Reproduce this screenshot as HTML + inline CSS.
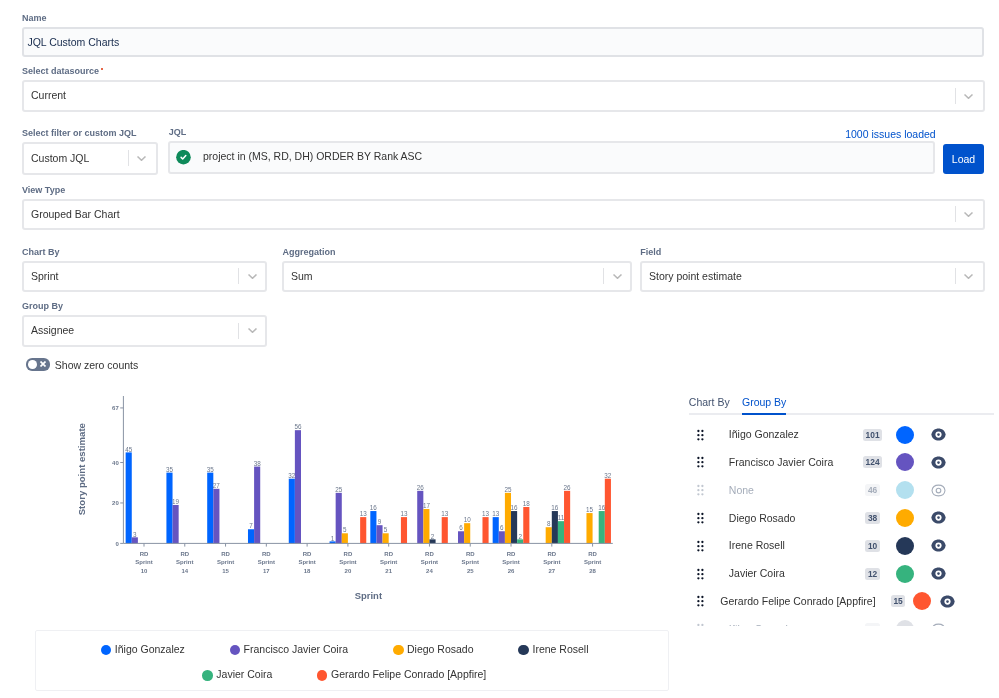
<!DOCTYPE html>
<html><head><meta charset="utf-8">
<style>
*{box-sizing:border-box;margin:0;padding:0}
html,body{width:999px;height:698px;overflow:hidden;background:#fff}
body{position:relative;font-family:"Liberation Sans",sans-serif;-webkit-font-smoothing:antialiased}
#root{position:absolute;left:0;top:0;width:999px;height:698px;will-change:transform}
.a{position:absolute;white-space:nowrap;line-height:1}
.lbl{margin-top:0.6px;font-size:9px;font-weight:bold;color:#5E6C84}
.box{position:absolute;border:2px solid #E6E7EA;border-radius:3px;background:#fff}
.txt{font-size:10.5px;color:#333}
.sep{position:absolute;width:1px;background:#E1E2E5}
.chev{position:absolute;width:9px;height:5px}
</style></head><body><div id="root">
<!-- Name -->
<div class="a lbl" style="left:22px;top:13.3px">Name</div>
<div class="box" style="left:22px;top:27px;width:962px;height:30px;background:#FAFBFC;border-color:#E0E2E6"></div>
<div class="a txt" style="left:27.4px;top:36.5px;color:#172B4D">JQL Custom Charts</div>

<!-- datasource -->
<div class="a lbl" style="left:22px;top:66.5px">Select datasource</div>
<div class="a" style="left:100.6px;top:67.5px;width:2.8px;height:2.8px;border-radius:50%;background:#DE350B"></div>
<div class="box" style="left:22px;top:80px;width:963px;height:32px"></div>
<div class="a txt" style="left:31px;top:90.3px">Current</div>
<div class="sep" style="left:955px;top:88px;height:16px"></div>
<svg class="chev" style="left:964px;top:93.5px" viewBox="0 0 9 5"><path d="M0.5 0.5 L4.5 4.3 L8.5 0.5" fill="none" stroke="#B8B8B8" stroke-width="1.5"/></svg>


<div class="a lbl" style="left:22px;top:128.58px">Select filter or custom JQL</div>
<div class="a lbl" style="left:168.7px;top:127.08px">JQL</div>
<div class="a" style="left:845.2px;top:128.91px;font-size:10.5px;color:#0052CC">1000 issues loaded</div>
<div class="box" style="left:22px;top:142px;width:136px;height:33px"></div>
<div class="sep" style="left:128px;top:150.0px;height:16px"></div>
<svg class="chev" style="left:137.3px;top:155.5px" viewBox="0 0 9 5"><path d="M0.5 0.5 L4.5 4.3 L8.5 0.5" fill="none" stroke="#B8B8B8" stroke-width="1.5"/></svg>
<div class="a txt" style="left:31px;top:152.51px;font-size:10.5px">Custom JQL</div>
<div class="box" style="left:168px;top:141px;width:767px;height:33px;background:#FAFBFC"></div>
<svg style="position:absolute;left:176px;top:150.2px" width="15" height="15" viewBox="0 0 15 15"><circle cx="7.45" cy="7.2" r="7.3" fill="#0E8A5A"/><path d="M5.1 7.4 L6.7 9.0 L9.8 5.6" fill="none" stroke="#fff" stroke-width="1.5" stroke-linecap="round" stroke-linejoin="round"/></svg>
<div class="a txt" style="left:203px;top:151.41px;font-size:10.5px">project in (MS, RD, DH) ORDER BY Rank ASC</div>
<div class="a" style="left:943px;top:144px;width:41px;height:30px;background:#0052CC;border-radius:3px"></div>
<div class="a" style="left:951.8px;top:153.91px;font-size:10.5px;color:#fff">Load</div>
<div class="a lbl" style="left:22px;top:185.28px">View Type</div>
<div class="box" style="left:22px;top:199px;width:963px;height:31px"></div>
<div class="sep" style="left:955px;top:206.0px;height:16px"></div>
<svg class="chev" style="left:964.1px;top:211.5px" viewBox="0 0 9 5"><path d="M0.5 0.5 L4.5 4.3 L8.5 0.5" fill="none" stroke="#B8B8B8" stroke-width="1.5"/></svg>
<div class="a txt" style="left:31px;top:208.71px;font-size:10.5px">Grouped Bar Chart</div>
<div class="a lbl" style="left:22px;top:247.38px">Chart By</div>
<div class="a lbl" style="left:282.6px;top:247.38px">Aggregation</div>
<div class="a lbl" style="left:640.3px;top:247.38px">Field</div>
<div class="box" style="left:22px;top:261px;width:245px;height:31px"></div>
<div class="sep" style="left:238px;top:268.0px;height:16px"></div>
<svg class="chev" style="left:247.5px;top:273.5px" viewBox="0 0 9 5"><path d="M0.5 0.5 L4.5 4.3 L8.5 0.5" fill="none" stroke="#B8B8B8" stroke-width="1.5"/></svg>
<div class="a txt" style="left:31px;top:270.81px;font-size:10.5px">Sprint</div>
<div class="box" style="left:282px;top:261px;width:350px;height:31px"></div>
<div class="sep" style="left:603.4px;top:268.0px;height:16px"></div>
<svg class="chev" style="left:612.5px;top:273.5px" viewBox="0 0 9 5"><path d="M0.5 0.5 L4.5 4.3 L8.5 0.5" fill="none" stroke="#B8B8B8" stroke-width="1.5"/></svg>
<div class="a txt" style="left:291px;top:270.81px;font-size:10.5px">Sum</div>
<div class="box" style="left:640px;top:261px;width:345px;height:31px"></div>
<div class="sep" style="left:955px;top:268.0px;height:16px"></div>
<svg class="chev" style="left:964.1px;top:273.5px" viewBox="0 0 9 5"><path d="M0.5 0.5 L4.5 4.3 L8.5 0.5" fill="none" stroke="#B8B8B8" stroke-width="1.5"/></svg>
<div class="a txt" style="left:649px;top:270.81px;font-size:10.5px">Story point estimate</div>
<div class="a lbl" style="left:22px;top:301.38px">Group By</div>
<div class="box" style="left:22px;top:315px;width:245px;height:32px"></div>
<div class="sep" style="left:238px;top:322.5px;height:16px"></div>
<svg class="chev" style="left:247.5px;top:328.0px" viewBox="0 0 9 5"><path d="M0.5 0.5 L4.5 4.3 L8.5 0.5" fill="none" stroke="#B8B8B8" stroke-width="1.5"/></svg>
<div class="a txt" style="left:31px;top:324.61px;font-size:10.5px">Assignee</div>
<div class="a" style="left:26px;top:358.4px;width:24px;height:12.2px;border-radius:6.1px;background:#67758D"></div>
<div class="a" style="left:27.8px;top:359.9px;width:8.8px;height:8.8px;border-radius:50%;background:#fff"></div>
<svg style="position:absolute;left:40.4px;top:361.4px" width="6" height="6" viewBox="0 0 6 6"><path d="M1.1 1.1L4.9 4.9M4.9 1.1L1.1 4.9" stroke="#fff" stroke-width="1.7" stroke-linecap="square"/></svg>
<div class="a txt" style="left:54.8px;top:359.71px;font-size:10.5px">Show zero counts</div>

<!--CHART-->
<svg style="position:absolute;left:0;top:0" width="999" height="698" viewBox="0 0 999 698">
<rect x="125.64" y="452.41" width="6.12" height="90.99" fill="#0065FF"/>
<text x="128.70" y="451.61" text-anchor="middle" font-size="6.3" fill="#6B778C">45</text>
<rect x="131.76" y="537.33" width="6.12" height="6.07" fill="#6554C0"/>
<text x="134.82" y="536.53" text-anchor="middle" font-size="6.3" fill="#6B778C">3</text>
<rect x="166.42" y="472.63" width="6.12" height="70.77" fill="#0065FF"/>
<text x="169.48" y="471.83" text-anchor="middle" font-size="6.3" fill="#6B778C">35</text>
<rect x="172.54" y="504.98" width="6.12" height="38.42" fill="#6554C0"/>
<text x="175.60" y="504.18" text-anchor="middle" font-size="6.3" fill="#6B778C">19</text>
<rect x="207.20" y="472.63" width="6.12" height="70.77" fill="#0065FF"/>
<text x="210.26" y="471.83" text-anchor="middle" font-size="6.3" fill="#6B778C">35</text>
<rect x="213.32" y="488.81" width="6.12" height="54.59" fill="#6554C0"/>
<text x="216.38" y="488.01" text-anchor="middle" font-size="6.3" fill="#6B778C">27</text>
<rect x="247.98" y="529.25" width="6.12" height="14.15" fill="#0065FF"/>
<text x="251.04" y="528.45" text-anchor="middle" font-size="6.3" fill="#6B778C">7</text>
<rect x="254.10" y="466.56" width="6.12" height="76.84" fill="#6554C0"/>
<text x="257.16" y="465.76" text-anchor="middle" font-size="6.3" fill="#6B778C">38</text>
<rect x="288.76" y="478.70" width="6.12" height="64.70" fill="#0065FF"/>
<text x="291.82" y="477.90" text-anchor="middle" font-size="6.3" fill="#6B778C">32</text>
<rect x="294.88" y="430.17" width="6.12" height="113.23" fill="#6554C0"/>
<text x="297.94" y="429.37" text-anchor="middle" font-size="6.3" fill="#6B778C">56</text>
<rect x="329.54" y="541.38" width="6.12" height="2.02" fill="#0065FF"/>
<text x="332.60" y="540.58" text-anchor="middle" font-size="6.3" fill="#6B778C">1</text>
<rect x="335.66" y="492.85" width="6.12" height="50.55" fill="#6554C0"/>
<text x="338.72" y="492.05" text-anchor="middle" font-size="6.3" fill="#6B778C">25</text>
<rect x="341.78" y="533.29" width="6.12" height="10.11" fill="#FFAB00"/>
<text x="344.84" y="532.49" text-anchor="middle" font-size="6.3" fill="#6B778C">5</text>
<rect x="360.14" y="517.11" width="6.12" height="26.29" fill="#FF5630"/>
<text x="363.20" y="516.31" text-anchor="middle" font-size="6.3" fill="#6B778C">13</text>
<rect x="370.32" y="511.05" width="6.12" height="32.35" fill="#0065FF"/>
<text x="373.38" y="510.25" text-anchor="middle" font-size="6.3" fill="#6B778C">16</text>
<rect x="376.44" y="525.20" width="6.12" height="18.20" fill="#6554C0"/>
<text x="379.50" y="524.40" text-anchor="middle" font-size="6.3" fill="#6B778C">9</text>
<rect x="382.56" y="533.29" width="6.12" height="10.11" fill="#FFAB00"/>
<text x="385.62" y="532.49" text-anchor="middle" font-size="6.3" fill="#6B778C">5</text>
<rect x="400.92" y="517.11" width="6.12" height="26.29" fill="#FF5630"/>
<text x="403.98" y="516.31" text-anchor="middle" font-size="6.3" fill="#6B778C">13</text>
<rect x="417.22" y="490.83" width="6.12" height="52.57" fill="#6554C0"/>
<text x="420.28" y="490.03" text-anchor="middle" font-size="6.3" fill="#6B778C">26</text>
<rect x="423.34" y="509.03" width="6.12" height="34.37" fill="#FFAB00"/>
<text x="426.40" y="508.23" text-anchor="middle" font-size="6.3" fill="#6B778C">17</text>
<rect x="429.46" y="539.36" width="6.12" height="4.04" fill="#253858"/>
<text x="432.52" y="538.56" text-anchor="middle" font-size="6.3" fill="#6B778C">2</text>
<rect x="441.70" y="517.11" width="6.12" height="26.29" fill="#FF5630"/>
<text x="444.76" y="516.31" text-anchor="middle" font-size="6.3" fill="#6B778C">13</text>
<rect x="458.00" y="531.27" width="6.12" height="12.13" fill="#6554C0"/>
<text x="461.06" y="530.47" text-anchor="middle" font-size="6.3" fill="#6B778C">6</text>
<rect x="464.12" y="523.18" width="6.12" height="20.22" fill="#FFAB00"/>
<text x="467.18" y="522.38" text-anchor="middle" font-size="6.3" fill="#6B778C">10</text>
<rect x="482.48" y="517.11" width="6.12" height="26.29" fill="#FF5630"/>
<text x="485.54" y="516.31" text-anchor="middle" font-size="6.3" fill="#6B778C">13</text>
<rect x="492.66" y="517.11" width="6.12" height="26.29" fill="#0065FF"/>
<text x="495.72" y="516.31" text-anchor="middle" font-size="6.3" fill="#6B778C">13</text>
<rect x="498.78" y="531.27" width="6.12" height="12.13" fill="#6554C0"/>
<text x="501.84" y="530.47" text-anchor="middle" font-size="6.3" fill="#6B778C">6</text>
<rect x="504.90" y="492.85" width="6.12" height="50.55" fill="#FFAB00"/>
<text x="507.96" y="492.05" text-anchor="middle" font-size="6.3" fill="#6B778C">25</text>
<rect x="511.02" y="511.05" width="6.12" height="32.35" fill="#253858"/>
<text x="514.08" y="510.25" text-anchor="middle" font-size="6.3" fill="#6B778C">16</text>
<rect x="517.14" y="539.36" width="6.12" height="4.04" fill="#36B37E"/>
<text x="520.20" y="538.56" text-anchor="middle" font-size="6.3" fill="#6B778C">2</text>
<rect x="523.26" y="507.00" width="6.12" height="36.40" fill="#FF5630"/>
<text x="526.32" y="506.20" text-anchor="middle" font-size="6.3" fill="#6B778C">18</text>
<rect x="545.68" y="527.22" width="6.12" height="16.18" fill="#FFAB00"/>
<text x="548.74" y="526.42" text-anchor="middle" font-size="6.3" fill="#6B778C">8</text>
<rect x="551.80" y="511.05" width="6.12" height="32.35" fill="#253858"/>
<text x="554.86" y="510.25" text-anchor="middle" font-size="6.3" fill="#6B778C">16</text>
<rect x="557.92" y="521.16" width="6.12" height="22.24" fill="#36B37E"/>
<text x="560.98" y="520.36" text-anchor="middle" font-size="6.3" fill="#6B778C">11</text>
<rect x="564.04" y="490.83" width="6.12" height="52.57" fill="#FF5630"/>
<text x="567.10" y="490.03" text-anchor="middle" font-size="6.3" fill="#6B778C">26</text>
<rect x="586.46" y="513.07" width="6.12" height="30.33" fill="#FFAB00"/>
<text x="589.52" y="512.27" text-anchor="middle" font-size="6.3" fill="#6B778C">15</text>
<rect x="598.70" y="511.05" width="6.12" height="32.35" fill="#36B37E"/>
<text x="601.76" y="510.25" text-anchor="middle" font-size="6.3" fill="#6B778C">16</text>
<rect x="604.82" y="478.70" width="6.12" height="64.70" fill="#FF5630"/>
<text x="607.88" y="477.90" text-anchor="middle" font-size="6.3" fill="#6B778C">32</text>
<line x1="123.4" y1="396" x2="123.4" y2="543.4" stroke="#8993A4" stroke-width="1"/>
<line x1="123.4" y1="543.4" x2="612.8" y2="543.4" stroke="#8993A4" stroke-width="1"/>
<line x1="120.2" y1="543.40" x2="123.4" y2="543.40" stroke="#8993A4" stroke-width="1"/>
<text x="118.8" y="545.50" text-anchor="end" font-size="6" font-weight="bold" fill="#6B778C">0</text>
<line x1="120.2" y1="502.96" x2="123.4" y2="502.96" stroke="#8993A4" stroke-width="1"/>
<text x="118.8" y="505.06" text-anchor="end" font-size="6" font-weight="bold" fill="#6B778C">20</text>
<line x1="120.2" y1="462.52" x2="123.4" y2="462.52" stroke="#8993A4" stroke-width="1"/>
<text x="118.8" y="464.62" text-anchor="end" font-size="6" font-weight="bold" fill="#6B778C">40</text>
<line x1="120.2" y1="407.93" x2="123.4" y2="407.93" stroke="#8993A4" stroke-width="1"/>
<text x="118.8" y="410.03" text-anchor="end" font-size="6" font-weight="bold" fill="#6B778C">67</text>
<line x1="144.00" y1="543.4" x2="144.00" y2="546.6" stroke="#8993A4" stroke-width="1"/>
<text x="144.00" y="556.3" text-anchor="middle" font-size="6" font-weight="bold" fill="#6B778C">RD</text>
<text x="144.00" y="564.2" text-anchor="middle" font-size="6" font-weight="bold" fill="#6B778C">Sprint</text>
<text x="144.00" y="572.8" text-anchor="middle" font-size="6" font-weight="bold" fill="#6B778C">10</text>
<line x1="184.78" y1="543.4" x2="184.78" y2="546.6" stroke="#8993A4" stroke-width="1"/>
<text x="184.78" y="556.3" text-anchor="middle" font-size="6" font-weight="bold" fill="#6B778C">RD</text>
<text x="184.78" y="564.2" text-anchor="middle" font-size="6" font-weight="bold" fill="#6B778C">Sprint</text>
<text x="184.78" y="572.8" text-anchor="middle" font-size="6" font-weight="bold" fill="#6B778C">14</text>
<line x1="225.56" y1="543.4" x2="225.56" y2="546.6" stroke="#8993A4" stroke-width="1"/>
<text x="225.56" y="556.3" text-anchor="middle" font-size="6" font-weight="bold" fill="#6B778C">RD</text>
<text x="225.56" y="564.2" text-anchor="middle" font-size="6" font-weight="bold" fill="#6B778C">Sprint</text>
<text x="225.56" y="572.8" text-anchor="middle" font-size="6" font-weight="bold" fill="#6B778C">15</text>
<line x1="266.34" y1="543.4" x2="266.34" y2="546.6" stroke="#8993A4" stroke-width="1"/>
<text x="266.34" y="556.3" text-anchor="middle" font-size="6" font-weight="bold" fill="#6B778C">RD</text>
<text x="266.34" y="564.2" text-anchor="middle" font-size="6" font-weight="bold" fill="#6B778C">Sprint</text>
<text x="266.34" y="572.8" text-anchor="middle" font-size="6" font-weight="bold" fill="#6B778C">17</text>
<line x1="307.12" y1="543.4" x2="307.12" y2="546.6" stroke="#8993A4" stroke-width="1"/>
<text x="307.12" y="556.3" text-anchor="middle" font-size="6" font-weight="bold" fill="#6B778C">RD</text>
<text x="307.12" y="564.2" text-anchor="middle" font-size="6" font-weight="bold" fill="#6B778C">Sprint</text>
<text x="307.12" y="572.8" text-anchor="middle" font-size="6" font-weight="bold" fill="#6B778C">18</text>
<line x1="347.90" y1="543.4" x2="347.90" y2="546.6" stroke="#8993A4" stroke-width="1"/>
<text x="347.90" y="556.3" text-anchor="middle" font-size="6" font-weight="bold" fill="#6B778C">RD</text>
<text x="347.90" y="564.2" text-anchor="middle" font-size="6" font-weight="bold" fill="#6B778C">Sprint</text>
<text x="347.90" y="572.8" text-anchor="middle" font-size="6" font-weight="bold" fill="#6B778C">20</text>
<line x1="388.68" y1="543.4" x2="388.68" y2="546.6" stroke="#8993A4" stroke-width="1"/>
<text x="388.68" y="556.3" text-anchor="middle" font-size="6" font-weight="bold" fill="#6B778C">RD</text>
<text x="388.68" y="564.2" text-anchor="middle" font-size="6" font-weight="bold" fill="#6B778C">Sprint</text>
<text x="388.68" y="572.8" text-anchor="middle" font-size="6" font-weight="bold" fill="#6B778C">21</text>
<line x1="429.46" y1="543.4" x2="429.46" y2="546.6" stroke="#8993A4" stroke-width="1"/>
<text x="429.46" y="556.3" text-anchor="middle" font-size="6" font-weight="bold" fill="#6B778C">RD</text>
<text x="429.46" y="564.2" text-anchor="middle" font-size="6" font-weight="bold" fill="#6B778C">Sprint</text>
<text x="429.46" y="572.8" text-anchor="middle" font-size="6" font-weight="bold" fill="#6B778C">24</text>
<line x1="470.24" y1="543.4" x2="470.24" y2="546.6" stroke="#8993A4" stroke-width="1"/>
<text x="470.24" y="556.3" text-anchor="middle" font-size="6" font-weight="bold" fill="#6B778C">RD</text>
<text x="470.24" y="564.2" text-anchor="middle" font-size="6" font-weight="bold" fill="#6B778C">Sprint</text>
<text x="470.24" y="572.8" text-anchor="middle" font-size="6" font-weight="bold" fill="#6B778C">25</text>
<line x1="511.02" y1="543.4" x2="511.02" y2="546.6" stroke="#8993A4" stroke-width="1"/>
<text x="511.02" y="556.3" text-anchor="middle" font-size="6" font-weight="bold" fill="#6B778C">RD</text>
<text x="511.02" y="564.2" text-anchor="middle" font-size="6" font-weight="bold" fill="#6B778C">Sprint</text>
<text x="511.02" y="572.8" text-anchor="middle" font-size="6" font-weight="bold" fill="#6B778C">26</text>
<line x1="551.80" y1="543.4" x2="551.80" y2="546.6" stroke="#8993A4" stroke-width="1"/>
<text x="551.80" y="556.3" text-anchor="middle" font-size="6" font-weight="bold" fill="#6B778C">RD</text>
<text x="551.80" y="564.2" text-anchor="middle" font-size="6" font-weight="bold" fill="#6B778C">Sprint</text>
<text x="551.80" y="572.8" text-anchor="middle" font-size="6" font-weight="bold" fill="#6B778C">27</text>
<line x1="592.58" y1="543.4" x2="592.58" y2="546.6" stroke="#8993A4" stroke-width="1"/>
<text x="592.58" y="556.3" text-anchor="middle" font-size="6" font-weight="bold" fill="#6B778C">RD</text>
<text x="592.58" y="564.2" text-anchor="middle" font-size="6" font-weight="bold" fill="#6B778C">Sprint</text>
<text x="592.58" y="572.8" text-anchor="middle" font-size="6" font-weight="bold" fill="#6B778C">28</text>
<text transform="translate(85.2,469.2) rotate(-90)" text-anchor="middle" font-size="9.6" font-weight="bold" fill="#5E6C84">Story point estimate</text>
<text x="368.4" y="598.6" text-anchor="middle" font-size="9.45" font-weight="bold" fill="#5E6C84">Sprint</text>
</svg>
<!--/CHART-->
<!--PANEL-->
<div class="a" style="left:688.8px;top:396.91px;font-size:10.5px;color:#42526E;font-weight:normal">Chart By</div>
<div class="a" style="left:742px;top:396.91px;font-size:10.5px;color:#0052CC;font-weight:normal">Group By</div>
<div class="a" style="left:689px;top:413px;width:305px;height:2px;background:#EBECF0"></div>
<div class="a" style="left:742px;top:413px;width:44px;height:2px;background:#0052CC"></div>
<div class="a" style="left:680px;top:420px;width:319px;height:206px;overflow:hidden">
<svg class="a" style="left:14px;top:8.50px" width="12" height="12" viewBox="0 0 12 12" fill="#0B1426"><circle cx="4.40" cy="2.00" r="1.15"/><circle cx="4.40" cy="6.20" r="1.15"/><circle cx="4.40" cy="10.30" r="1.15"/><circle cx="8.40" cy="2.00" r="1.15"/><circle cx="8.40" cy="6.20" r="1.15"/><circle cx="8.40" cy="10.30" r="1.15"/></svg>
<div class="a" style="left:48.799999999999955px;top:9.01px;font-size:10.5px;color:#333;font-weight:normal">Iñigo Gonzalez</div>
<div class="a" style="left:182.95px;top:8.50px;width:19.3px;height:12px;border-radius:2.5px;background:#DFE1E6;font-size:8.4px;font-weight:bold;color:#42526E;text-align:center;line-height:12.4px">101</div>
<div class="a" style="left:216.10px;top:5.50px;width:18px;height:18px;border-radius:50%;background:#0065FF"></div>
<svg class="a" style="left:250.80px;top:8.00px" width="15" height="13" viewBox="0 0 15 13"><path d="M0.4 6.5 C1.4 -1.6 13.6 -1.6 14.6 6.5 C13.6 14.6 1.4 14.6 0.4 6.5Z" fill="#3B4A69"/><circle cx="7.5" cy="6.6" r="3.1" fill="#fff"/><circle cx="7.5" cy="6.6" r="1.3" fill="#3B4A69"/></svg>
<svg class="a" style="left:14px;top:36.33px" width="12" height="12" viewBox="0 0 12 12" fill="#0B1426"><circle cx="4.40" cy="2.00" r="1.15"/><circle cx="4.40" cy="6.20" r="1.15"/><circle cx="4.40" cy="10.30" r="1.15"/><circle cx="8.40" cy="2.00" r="1.15"/><circle cx="8.40" cy="6.20" r="1.15"/><circle cx="8.40" cy="10.30" r="1.15"/></svg>
<div class="a" style="left:48.799999999999955px;top:36.84px;font-size:10.5px;color:#333;font-weight:normal">Francisco Javier Coira</div>
<div class="a" style="left:182.95px;top:36.33px;width:19.3px;height:12px;border-radius:2.5px;background:#DFE1E6;font-size:8.4px;font-weight:bold;color:#42526E;text-align:center;line-height:12.4px">124</div>
<div class="a" style="left:216.10px;top:33.33px;width:18px;height:18px;border-radius:50%;background:#6554C0"></div>
<svg class="a" style="left:250.80px;top:35.83px" width="15" height="13" viewBox="0 0 15 13"><path d="M0.4 6.5 C1.4 -1.6 13.6 -1.6 14.6 6.5 C13.6 14.6 1.4 14.6 0.4 6.5Z" fill="#3B4A69"/><circle cx="7.5" cy="6.6" r="3.1" fill="#fff"/><circle cx="7.5" cy="6.6" r="1.3" fill="#3B4A69"/></svg>
<svg class="a" style="left:14px;top:64.16px" width="12" height="12" viewBox="0 0 12 12" fill="#C1C7D0"><circle cx="4.40" cy="2.00" r="1.15"/><circle cx="4.40" cy="6.20" r="1.15"/><circle cx="4.40" cy="10.30" r="1.15"/><circle cx="8.40" cy="2.00" r="1.15"/><circle cx="8.40" cy="6.20" r="1.15"/><circle cx="8.40" cy="10.30" r="1.15"/></svg>
<div class="a" style="left:48.799999999999955px;top:64.67px;font-size:10.5px;color:#A5ADBA;font-weight:normal">None</div>
<div class="a" style="left:185.45px;top:64.16px;width:14.3px;height:12px;border-radius:2.5px;background:#F4F5F7;font-size:8.4px;font-weight:bold;color:#A5ADBA;text-align:center;line-height:12.4px">46</div>
<div class="a" style="left:216.10px;top:61.16px;width:18px;height:18px;border-radius:50%;background:#B3E0EF"></div>
<svg class="a" style="left:250.80px;top:63.66px" width="15" height="13" viewBox="0 0 15 13"><path d="M1 6.5 C1.9 -0.7 13.1 -0.7 14 6.5 C13.1 13.7 1.9 13.7 1 6.5Z" fill="none" stroke="#A5ADBA" stroke-width="1.1"/><circle cx="7.5" cy="6.6" r="2.3" fill="none" stroke="#A5ADBA" stroke-width="1.1"/></svg>
<svg class="a" style="left:14px;top:91.99px" width="12" height="12" viewBox="0 0 12 12" fill="#0B1426"><circle cx="4.40" cy="2.00" r="1.15"/><circle cx="4.40" cy="6.20" r="1.15"/><circle cx="4.40" cy="10.30" r="1.15"/><circle cx="8.40" cy="2.00" r="1.15"/><circle cx="8.40" cy="6.20" r="1.15"/><circle cx="8.40" cy="10.30" r="1.15"/></svg>
<div class="a" style="left:48.799999999999955px;top:92.50px;font-size:10.5px;color:#333;font-weight:normal">Diego Rosado</div>
<div class="a" style="left:185.45px;top:91.99px;width:14.3px;height:12px;border-radius:2.5px;background:#DFE1E6;font-size:8.4px;font-weight:bold;color:#42526E;text-align:center;line-height:12.4px">38</div>
<div class="a" style="left:216.10px;top:88.99px;width:18px;height:18px;border-radius:50%;background:#FFAB00"></div>
<svg class="a" style="left:250.80px;top:91.49px" width="15" height="13" viewBox="0 0 15 13"><path d="M0.4 6.5 C1.4 -1.6 13.6 -1.6 14.6 6.5 C13.6 14.6 1.4 14.6 0.4 6.5Z" fill="#3B4A69"/><circle cx="7.5" cy="6.6" r="3.1" fill="#fff"/><circle cx="7.5" cy="6.6" r="1.3" fill="#3B4A69"/></svg>
<svg class="a" style="left:14px;top:119.82px" width="12" height="12" viewBox="0 0 12 12" fill="#0B1426"><circle cx="4.40" cy="2.00" r="1.15"/><circle cx="4.40" cy="6.20" r="1.15"/><circle cx="4.40" cy="10.30" r="1.15"/><circle cx="8.40" cy="2.00" r="1.15"/><circle cx="8.40" cy="6.20" r="1.15"/><circle cx="8.40" cy="10.30" r="1.15"/></svg>
<div class="a" style="left:48.799999999999955px;top:120.33px;font-size:10.5px;color:#333;font-weight:normal">Irene Rosell</div>
<div class="a" style="left:185.45px;top:119.82px;width:14.3px;height:12px;border-radius:2.5px;background:#DFE1E6;font-size:8.4px;font-weight:bold;color:#42526E;text-align:center;line-height:12.4px">10</div>
<div class="a" style="left:216.10px;top:116.82px;width:18px;height:18px;border-radius:50%;background:#253858"></div>
<svg class="a" style="left:250.80px;top:119.32px" width="15" height="13" viewBox="0 0 15 13"><path d="M0.4 6.5 C1.4 -1.6 13.6 -1.6 14.6 6.5 C13.6 14.6 1.4 14.6 0.4 6.5Z" fill="#3B4A69"/><circle cx="7.5" cy="6.6" r="3.1" fill="#fff"/><circle cx="7.5" cy="6.6" r="1.3" fill="#3B4A69"/></svg>
<svg class="a" style="left:14px;top:147.65px" width="12" height="12" viewBox="0 0 12 12" fill="#0B1426"><circle cx="4.40" cy="2.00" r="1.15"/><circle cx="4.40" cy="6.20" r="1.15"/><circle cx="4.40" cy="10.30" r="1.15"/><circle cx="8.40" cy="2.00" r="1.15"/><circle cx="8.40" cy="6.20" r="1.15"/><circle cx="8.40" cy="10.30" r="1.15"/></svg>
<div class="a" style="left:48.799999999999955px;top:148.16px;font-size:10.5px;color:#333;font-weight:normal">Javier Coira</div>
<div class="a" style="left:185.45px;top:147.65px;width:14.3px;height:12px;border-radius:2.5px;background:#DFE1E6;font-size:8.4px;font-weight:bold;color:#42526E;text-align:center;line-height:12.4px">12</div>
<div class="a" style="left:216.10px;top:144.65px;width:18px;height:18px;border-radius:50%;background:#36B37E"></div>
<svg class="a" style="left:250.80px;top:147.15px" width="15" height="13" viewBox="0 0 15 13"><path d="M0.4 6.5 C1.4 -1.6 13.6 -1.6 14.6 6.5 C13.6 14.6 1.4 14.6 0.4 6.5Z" fill="#3B4A69"/><circle cx="7.5" cy="6.6" r="3.1" fill="#fff"/><circle cx="7.5" cy="6.6" r="1.3" fill="#3B4A69"/></svg>
<svg class="a" style="left:14px;top:175.48px" width="12" height="12" viewBox="0 0 12 12" fill="#0B1426"><circle cx="4.40" cy="2.00" r="1.15"/><circle cx="4.40" cy="6.20" r="1.15"/><circle cx="4.40" cy="10.30" r="1.15"/><circle cx="8.40" cy="2.00" r="1.15"/><circle cx="8.40" cy="6.20" r="1.15"/><circle cx="8.40" cy="10.30" r="1.15"/></svg>
<div class="a" style="left:40.299999999999955px;top:175.99px;font-size:10.5px;color:#333;font-weight:normal">Gerardo Felipe Conrado [Appfire]</div>
<div class="a" style="left:210.95px;top:175.48px;width:14.3px;height:12px;border-radius:2.5px;background:#DFE1E6;font-size:8.4px;font-weight:bold;color:#42526E;text-align:center;line-height:12.4px">15</div>
<div class="a" style="left:233.00px;top:172.48px;width:18px;height:18px;border-radius:50%;background:#FF5630"></div>
<svg class="a" style="left:259.80px;top:174.98px" width="15" height="13" viewBox="0 0 15 13"><path d="M0.4 6.5 C1.4 -1.6 13.6 -1.6 14.6 6.5 C13.6 14.6 1.4 14.6 0.4 6.5Z" fill="#3B4A69"/><circle cx="7.5" cy="6.6" r="3.1" fill="#fff"/><circle cx="7.5" cy="6.6" r="1.3" fill="#3B4A69"/></svg>
<svg class="a" style="left:14px;top:203.31px" width="12" height="12" viewBox="0 0 12 12" fill="#C1C7D0"><circle cx="4.40" cy="2.00" r="1.15"/><circle cx="4.40" cy="6.20" r="1.15"/><circle cx="4.40" cy="10.30" r="1.15"/><circle cx="8.40" cy="2.00" r="1.15"/><circle cx="8.40" cy="6.20" r="1.15"/><circle cx="8.40" cy="10.30" r="1.15"/></svg>
<div class="a" style="left:48.799999999999955px;top:203.82px;font-size:10.5px;color:#A5ADBA;font-weight:normal">Iñigo Gonzalez</div>
<div class="a" style="left:185.45px;top:203.31px;width:14.3px;height:12px;border-radius:2.5px;background:#F4F5F7;font-size:8.4px;font-weight:bold;color:#A5ADBA;text-align:center;line-height:12.4px">8</div>
<div class="a" style="left:216.10px;top:200.31px;width:18px;height:18px;border-radius:50%;background:#DFE1E6"></div>
<svg class="a" style="left:250.80px;top:202.81px" width="15" height="13" viewBox="0 0 15 13"><path d="M1 6.5 C1.9 -0.7 13.1 -0.7 14 6.5 C13.1 13.7 1.9 13.7 1 6.5Z" fill="none" stroke="#A5ADBA" stroke-width="1.1"/><circle cx="7.5" cy="6.6" r="2.3" fill="none" stroke="#A5ADBA" stroke-width="1.1"/></svg>
</div>
<div class="a" style="left:34.5px;top:630.3px;width:634.5px;height:60.8px;border:1px solid #EFF0F3;border-radius:2px"></div>
<div class="a" style="left:100.80px;top:644.50px;width:10.6px;height:10.6px;border-radius:50%;background:#0065FF"></div>
<div class="a" style="left:114.8px;top:643.76px;font-size:10.5px;color:#333;font-weight:normal">Iñigo Gonzalez</div>
<div class="a" style="left:229.60px;top:644.50px;width:10.6px;height:10.6px;border-radius:50%;background:#6554C0"></div>
<div class="a" style="left:243.6px;top:643.76px;font-size:10.5px;color:#333;font-weight:normal">Francisco Javier Coira</div>
<div class="a" style="left:393.30px;top:644.50px;width:10.6px;height:10.6px;border-radius:50%;background:#FFAB00"></div>
<div class="a" style="left:407px;top:643.76px;font-size:10.5px;color:#333;font-weight:normal">Diego Rosado</div>
<div class="a" style="left:518.20px;top:644.50px;width:10.6px;height:10.6px;border-radius:50%;background:#253858"></div>
<div class="a" style="left:532.5px;top:643.76px;font-size:10.5px;color:#333;font-weight:normal">Irene Rosell</div>
<div class="a" style="left:202.20px;top:670.20px;width:10.6px;height:10.6px;border-radius:50%;background:#36B37E"></div>
<div class="a" style="left:216.3px;top:669.46px;font-size:10.5px;color:#333;font-weight:normal">Javier Coira</div>
<div class="a" style="left:316.70px;top:670.20px;width:10.6px;height:10.6px;border-radius:50%;background:#FF5630"></div>
<div class="a" style="left:331px;top:669.46px;font-size:10.5px;color:#333;font-weight:normal">Gerardo Felipe Conrado [Appfire]</div>
<!--/PANEL-->
</div></body></html>
